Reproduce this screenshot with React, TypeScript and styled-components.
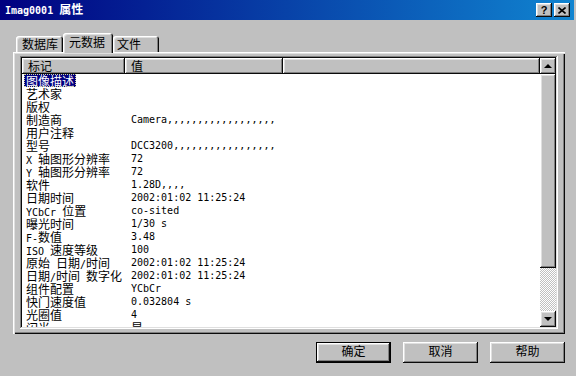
import styled, { createGlobalStyle } from 'styled-components';

const GlobalStyle = createGlobalStyle`
  html, body {
    margin: 0;
    padding: 0;
    background: #c0c0c0;
  }
  body {
    font-family: "DejaVu Sans Mono", "Noto Sans CJK SC", monospace;
    font-size: 10px;
    color: #000;
  }
`;

const raised = `
  box-shadow: inset -1px -1px #0a0a0a, inset 1px 1px #ffffff,
    inset -2px -2px #808080, inset 2px 2px #dfdfdf;
`;

const Window = styled.div`
  width: 576px;
  height: 376px;
  overflow: hidden;
  display: flex;
  flex-direction: column;
  background: #c0c0c0;
`;

const TitleBar = styled.div`
  height: 20px;
  margin-right: 2px;
  padding: 0 4px 0 5px;
  display: flex;
  align-items: center;
  background: linear-gradient(90deg, #000080 0%, #1084d0 100%);
  color: #fff;
  font-weight: bold;
  line-height: 14px;
`;

const TitleText = styled.div`
  flex: 1;
  white-space: nowrap;
`;

const TitleButtons = styled.div`
  display: flex;
  gap: 2px;
`;

const TitleButton = styled.div`
  width: 16px;
  height: 14px;
  display: flex;
  align-items: center;
  justify-content: center;
  background: #c0c0c0;
  color: #000;
  font-family: "Liberation Sans", sans-serif;
  font-size: 11px;
  font-weight: bold;
  ${raised}
`;

const Han = styled.span`
  display: inline-block;
  line-height: 13px;
  font-family: "Noto Sans CJK SC", sans-serif;
  font-size: 12px;
`;

const HAN = /([\u3400-\u9fff\uff00-\uffef]+)/;

const Text = ({ children }: { children: string }) => (
  <>
    {children.split(HAN).map((part, i) => (i % 2 ? <Han key={i}>{part}</Han> : part))}
  </>
);

const Body = styled.div`
  display: flex;
  flex-direction: column;
  padding: 13px 11px 0 13px;
`;

const TabStrip = styled.div`
  height: 19px;
  padding-left: 3px;
  display: flex;
  align-items: flex-end;
`;

const Tab = styled.div<{ $active?: boolean; $width: number; $pad: number }>`
  position: relative;
  z-index: 1;
  box-sizing: border-box;
  width: ${p => p.$width}px;
  height: ${p => (p.$active ? 20 : 16)}px;
  margin-bottom: ${p => (p.$active ? -1 : 0)}px;
  padding: ${p => (p.$active ? 2 : 1)}px 0 0 ${p => p.$pad}px;
  line-height: 13px;
  background: #c0c0c0;
  border-radius: 3px 3px 0 0;
  box-shadow: inset 1px 1px #ffffff, inset -1px 0 #0a0a0a,
    inset -2px 0 #808080, inset 2px 2px #dfdfdf;
`;

const Panel = styled.div`
  height: 282px;
  box-sizing: border-box;
  padding: 4px 7px 5px 7px;
  display: flex;
  box-shadow: inset 1px 1px #ffffff, inset 2px 2px #dfdfdf,
    inset -1px -1px #0a0a0a, inset -2px -2px #808080;
`;

const ListView = styled.div`
  flex: 1;
  padding: 2px;
  display: flex;
  background: #fff;
  box-shadow: inset -1px -1px #ffffff, inset 1px 1px #808080,
    inset -2px -2px #dfdfdf, inset 2px 2px #0a0a0a;
`;

const ListContent = styled.div`
  flex: 1;
  min-width: 0;
  display: flex;
  flex-direction: column;
  overflow: hidden;
`;

const HeaderRow = styled.div`
  height: 16px;
  display: flex;
  flex-shrink: 0;
`;

const HeaderCell = styled.div<{ $width?: number }>`
  box-sizing: border-box;
  ${p => (p.$width ? `width: ${p.$width}px;` : 'flex: 1;')}
  padding: 1px 0 0 6px;
  line-height: 13px;
  background: #c0c0c0;
  ${raised}
`;

const Rows = styled.div`
  flex: 1;
  overflow: hidden;
`;

const Row = styled.div`
  height: 13px;
  line-height: 13px;
  display: flex;
  white-space: nowrap;
`;

const LabelCell = styled.div`
  width: 103px;
  box-sizing: border-box;
  padding-left: 2px;
`;

const LabelText = styled.span<{ $selected?: boolean }>`
  display: inline-block;
  height: 13px;
  padding: 0 2px;
  background: ${p => (p.$selected ? '#000080' : 'transparent')};
  color: ${p => (p.$selected ? '#fff' : '#000')};
  outline: ${p => (p.$selected ? '1px dotted #d8d8a0' : 'none')};
  outline-offset: -1px;
`;

const ValueCell = styled.div`
  padding-left: 6px;
`;

const ScrollBar = styled.div`
  width: 16px;
  display: flex;
  flex-direction: column;
`;

const ScrollButton = styled.div`
  height: 16px;
  display: flex;
  align-items: center;
  justify-content: center;
  background: #c0c0c0;
  ${raised}
`;

const Arrow = styled.div<{ $down?: boolean }>`
  width: 0;
  height: 0;
  border-left: 4px solid transparent;
  border-right: 4px solid transparent;
  ${p => (p.$down ? 'border-top: 4px solid #000;' : 'border-bottom: 4px solid #000;')}
`;

const Thumb = styled.div<{ $size: number }>`
  height: ${p => p.$size}px;
  flex-shrink: 0;
  background: #c0c0c0;
  ${raised}
`;

const Track = styled.div`
  flex: 1;
  background-image: repeating-conic-gradient(#c0c0c0 0 25%, #ffffff 0 50%);
  background-size: 2px 2px;
`;

const Footer = styled.div`
  margin-top: 8px;
  display: flex;
  justify-content: flex-end;
  gap: 12px;
`;

const Button = styled.div<{ $default?: boolean }>`
  width: 75px;
  height: 21px;
  line-height: 21px;
  text-align: center;
  background: #c0c0c0;
  box-shadow: ${p =>
    p.$default
      ? 'inset 0 0 0 1px #000, inset -2px -2px #0a0a0a, inset 2px 2px #fff, inset -3px -3px #808080, inset 3px 3px #dfdfdf'
      : 'inset -1px -1px #0a0a0a, inset 1px 1px #fff, inset -2px -2px #808080, inset 2px 2px #dfdfdf'};
`;

const fields: [string, string][] = [
  ['图像描述', ''],
  ['艺术家', ''],
  ['版权', ''],
  ['制造商', 'Camera' + ','.repeat(18)],
  ['用户注释', ''],
  ['型号', 'DCC3200' + ','.repeat(17)],
  ['X 轴图形分辨率', '72'],
  ['Y 轴图形分辨率', '72'],
  ['软件', '1.28D,,,,'],
  ['日期时间', '2002:01:02 11:25:24'],
  ['YCbCr 位置', 'co-sited'],
  ['曝光时间', '1/30 s'],
  ['F-数值', '3.48'],
  ['ISO 速度等级', '100'],
  ['原始 日期/时间', '2002:01:02 11:25:24'],
  ['日期/时间 数字化', '2002:01:02 11:25:24'],
  ['组件配置', 'YCbCr'],
  ['快门速度值', '0.032804 s'],
  ['光圈值', '4'],
  ['闪光', '是'],
];

const tabs = [
  { label: '数据库', width: 47, pad: 6 },
  { label: '元数据', width: 50, pad: 6, active: true },
  { label: '文件', width: 46, pad: 4 },
];

export default function App() {
  return (
    <>
      <GlobalStyle />
      <Window>
        <TitleBar>
          <TitleText>
            <Text>Imag0001 属性</Text>
          </TitleText>
          <TitleButtons>
            <TitleButton>?</TitleButton>
            <TitleButton>
              <svg width="8" height="7" viewBox="0 0 8 7">
                <path d="M0.5 0.5 L7.5 6.5 M7.5 0.5 L0.5 6.5" stroke="#000" strokeWidth="1.6" />
              </svg>
            </TitleButton>
          </TitleButtons>
        </TitleBar>
        <Body>
          <TabStrip>
            {tabs.map(t => (
              <Tab key={t.label} $active={t.active} $width={t.width} $pad={t.pad}>
                <Text>{t.label}</Text>
              </Tab>
            ))}
          </TabStrip>
          <Panel>
            <ListView>
              <ListContent>
                <HeaderRow>
                  <HeaderCell $width={103}><Text>标记</Text></HeaderCell>
                  <HeaderCell $width={158}><Text>值</Text></HeaderCell>
                  <HeaderCell />
                </HeaderRow>
                <Rows>
                  {fields.map(([label, value], i) => (
                    <Row key={label}>
                      <LabelCell>
                        <LabelText $selected={i === 0}><Text>{label}</Text></LabelText>
                      </LabelCell>
                      <ValueCell><Text>{value}</Text></ValueCell>
                    </Row>
                  ))}
                </Rows>
              </ListContent>
              <ScrollBar>
                <ScrollButton><Arrow /></ScrollButton>
                <Thumb $size={194} />
                <Track />
                <ScrollButton><Arrow $down /></ScrollButton>
              </ScrollBar>
            </ListView>
          </Panel>
          <Footer>
            <Button $default><Text>确定</Text></Button>
            <Button><Text>取消</Text></Button>
            <Button><Text>帮助</Text></Button>
          </Footer>
        </Body>
      </Window>
    </>
  );
}
